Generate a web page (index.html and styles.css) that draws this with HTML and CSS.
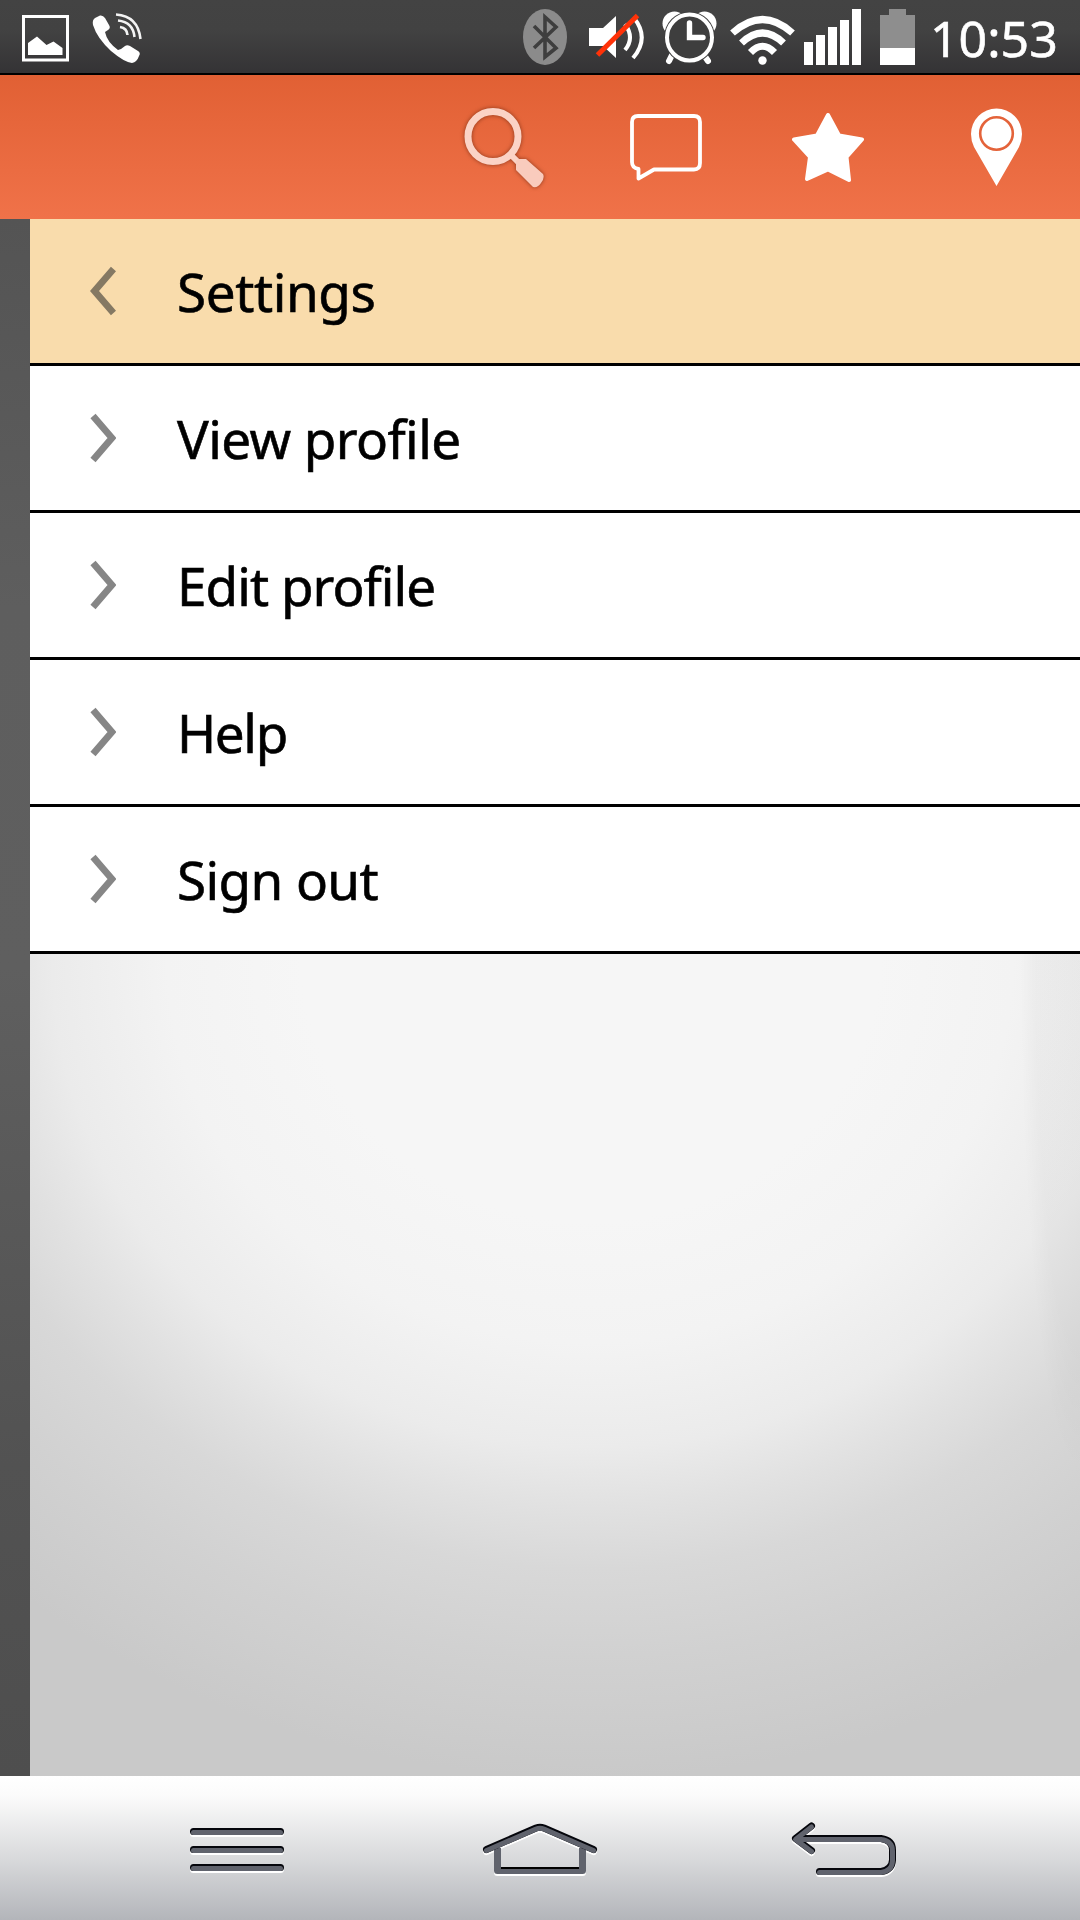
FILE: index.html
```
<!DOCTYPE html>
<html>
<head>
	<title>Settings</title>
	<meta charset="utf-8">
	<link rel="stylesheet" href="styles.css">
</head>
<body>
	<div class="statusbar">
		<svg class="s-photo" width="47" height="47" viewBox="22 15 47 47">
			<rect x="23.5" y="16.5" width="44" height="43.5" fill="none" stroke="#fff" stroke-width="3"/>
			<path d="M28 55V43L37 36.500L46.500 45L53.500 41.500L62.500 48V55Z" fill="#fff"/>
		</svg>
		<svg class="s-phone" width="52" height="52" viewBox="91 12 52 52">
			<path d="M95 18L100 15.500Q103 15 105 18L109 25Q111 28 108 30L105 32Q107 42 118 50L121 49L125 46Q127 44.500 130 46L138 51Q141 53 139 56Q137 62 132 63Q124 62 111 51Q97 38 93 25Q92 20 95 18Z" fill="#fff"/>
			<path d="M116 14.500Q138 16 140.500 39M118 20.500Q133 22 134.500 37M120 27Q127 28 127.500 35" fill="none" stroke="#f4f4f4" stroke-width="2.600"/>
		</svg>
		<div class="right">
			<svg class="s-bt" width="44" height="56" viewBox="523 9 44 56">
				<ellipse cx="545" cy="37" rx="22" ry="28" fill="#8b8b8b"/>
				<path d="M534 26L556 48L545 57V17L556 27L534 48" fill="none" stroke="#3e3e3e" stroke-width="3.600"/>
			</svg>
			<svg class="s-mute" width="58" height="48" viewBox="588 13 58 48">
				<path d="M589 28H603L616 16V58L603 46H589Z" fill="#fff"/>
				<path d="M625 24Q635 38 625 50M634 18Q650 38 633 58" fill="none" stroke="#fff" stroke-width="4"/>
				<path d="M597.500 55L637.500 15.500" stroke="#ff3208" stroke-width="5"/>
			</svg>
			<svg class="s-alarm" width="56" height="54" viewBox="661 11 56 54">
				<path d="M672 55L669 61M704 55L708 61" stroke="#fff" stroke-width="6" stroke-linecap="round"/>
				<circle cx="674.500" cy="23.500" r="12" fill="#fff"/>
				<circle cx="704.500" cy="23.500" r="12" fill="#fff"/>
				<ellipse cx="689.500" cy="37.500" rx="25.500" ry="26" fill="#3e3e3e"/>
				<ellipse cx="689.500" cy="37.500" rx="22.500" ry="23" fill="#3e3e3e" stroke="#fff" stroke-width="4"/>
				<path d="M689.500 23V37.500H703" fill="none" stroke="#fff" stroke-width="5.400" stroke-linecap="round"/>
			</svg>
			<svg class="s-wifi" width="66" height="50" viewBox="730 15 66 50">
				<path d="M732.500 33Q762.500 6 792.500 33M741.500 43Q762.500 23 783.500 43M750.500 52.500Q762.500 40 774.500 52.500" fill="none" stroke="#fff" stroke-width="7"/>
				<circle cx="762.500" cy="60.500" r="4.200" fill="#fff"/>
			</svg>
			<svg class="s-signal" width="57" height="56" viewBox="804 9 57 56">
				<path d="M804 42h9v23h-9zM816 35h9v30h-9zM828 27h9v38h-9zM840 20h9v45h-9zM852 9h9v56h-9z" fill="#fff"/>
			</svg>
			<svg class="s-battery" width="35" height="56" viewBox="880 9 35 56">
				<path d="M889 9h17v6h9v33h-35V15h9z" fill="#8e8e8e"/>
				<path d="M880 48h35v17h-35z" fill="#fff"/>
			</svg>
			<span class="time">10:53</span>
		</div>
	</div>

	<div class="appbar">
		<svg class="a-search" width="90" height="90" viewBox="460 100 90 90">
			<g stroke="#fbd3c6" fill="none">
				<circle cx="493" cy="136.500" r="25" stroke-width="7"/>
				<path d="M511 155L521 165" stroke-width="6"/>
				<path d="M516 164Q515 160 519 159H526L543 174Q545 178 541 183Q538 188 533 187L516 170Z" fill="#f9cbbd" stroke="none"/>
			</g>
		</svg>
		<svg class="a-chat" width="72" height="68" viewBox="630 114 72 68">
			<path d="M638 116H694Q700 116 700 122V163Q700 169.500 694 169.500H654L638.500 178.500V169Q632 168 632 162V122Q632 116 638 116Z" fill="none" stroke="#fff" stroke-width="3.800" stroke-linejoin="round"/>
		</svg>
		<svg class="a-star" width="72" height="70" viewBox="792 113 72 70">
			<path d="M828 115L839 135.500L862 139.500L846.500 157L849 180L828 169.500L807 179L810 157L794 139.500L817 135.500Z" fill="#fff" stroke="#fff" stroke-width="4" stroke-linejoin="round"/>
		</svg>
		<svg class="a-pin" width="52" height="78" viewBox="970 108 52 78">
			<path d="M996.500 186L974 147Q971 141 971 134A25.500 25.500 0 0 1 1022 134Q1022 141 1019 147Z" fill="#fff"/>
			<circle cx="996.500" cy="133.500" r="16.300" fill="none" stroke="#e4633a" stroke-width="2.600"/>
		</svg>
	</div>

	<div class="main">
		<div class="page-edge"></div>
		<div class="panel">
			<ul class="menu">
				<li class="current">
					<svg width="26" height="50" viewBox="0 0 26 50"><path d="M23.500 3L4.500 25L23.500 47"/></svg>
					<span class="settings">Settings</span>
				</li>
				<li>
					<svg width="26" height="50" viewBox="0 0 26 50"><path d="M3 3L22 25L3 47"/></svg>
					<span class="view">View profile</span>
				</li>
				<li>
					<svg width="26" height="50" viewBox="0 0 26 50"><path d="M3 3L22 25L3 47"/></svg>
					<span class="edit">Edit profile</span>
				</li>
				<li>
					<svg width="26" height="50" viewBox="0 0 26 50"><path d="M3 3L22 25L3 47"/></svg>
					<span class="help">Help</span>
				</li>
				<li>
					<svg width="26" height="50" viewBox="0 0 26 50"><path d="M3 3L22 25L3 47"/></svg>
					<span class="signout">Sign out</span>
				</li>
			</ul>
			<div class="empty"></div>
		</div>
	</div>

	<div class="navbar">
		<svg class="n-menu" width="96" height="50" viewBox="189 1826 96 50">
			<defs><path id="bars" d="M193.500 1831.500H280.500M193.500 1849.500H280.500M193.500 1867.500H280.500"/></defs>
			<use href="#bars" class="light" y="2"/>
			<use href="#bars" class="dark"/>
			<use href="#bars" class="fill" y="1"/>
		</svg>
		<svg class="n-home" width="116" height="56" viewBox="482 1822 116 56">
			<defs>
				<path id="walls" d="M497.500 1848V1870.500H582.500V1848"/>
				<path id="roof" d="M486.500 1849.500L536 1828Q540 1826.500 544 1828L593.500 1849.500"/>
			</defs>
			<use href="#walls" class="light" y="2"/>
			<use href="#roof" class="light" y="2"/>
			<use href="#walls" class="fill wide"/>
			<path d="M501 1868H579" stroke="#000" stroke-width="2"/>
			<use href="#roof" class="dark"/>
			<use href="#roof" class="fill" y="1"/>
		</svg>
		<svg class="n-back" width="108" height="58" viewBox="790 1820 108 58">
			<defs><path id="back" d="M811.500 1826L795.500 1838.500L811.500 1850.500M798 1838.500H881Q892.500 1840 892.500 1850V1860Q892 1870 881 1871.500H819.500"/></defs>
			<use href="#back" class="light" y="2"/>
			<use href="#back" class="dark"/>
			<use href="#back" class="fill" y="1"/>
		</svg>
	</div>
</body>
</html>
```
FILE: styles.css
```
*{
	padding: 0;
	margin: 0;
	box-sizing: border-box;
}
body{
	width: 1080px;
	height: 1920px;
	display: flex;
	flex-direction: column;
	overflow: hidden;
	font-family: "Noto Sans", "Open Sans", sans-serif;
}
svg{
	display: block;
	flex: none;
}

/* status bar */
.statusbar{
	height: 75px;
	display: flex;
	align-items: flex-start;
	padding-left: 22px;
	background: linear-gradient(#434343 0, #424242 30px, #343335 73px);
	border-bottom: 2px solid #000;
}
.s-photo{
	margin-top: 15px;
}
.s-phone{
	margin: 12px 0 0 22px;
}
.right{
	display: flex;
	align-items: flex-start;
	margin-left: 380px;
}
.s-bt, .s-signal, .s-battery{
	margin-top: 9px;
}
.s-mute{
	margin: 13px 0 0 21px;
}
.s-alarm{
	margin: 11px 0 0 15px;
}
.s-wifi{
	margin: 15px 0 0 13px;
}
.s-signal{
	margin-left: 8px;
}
.s-battery{
	margin-left: 19px;
}
.time{
	margin: 2px 0 0 15px;
	color: #fff;
	font-size: 50px;
	line-height: 72px;
	-webkit-text-stroke: 0.6px #fff;
	white-space: nowrap;
}

/* orange bar */
.appbar{
	height: 144px;
	display: flex;
	align-items: flex-start;
	padding-left: 460px;
	background: linear-gradient(#e16034, #f07249);
}
.a-search{
	margin-top: 25px;
	filter: drop-shadow(0 0 2px rgba(110, 40, 15, 0.75));
}
.a-chat{
	margin: 39px 0 0 80px;
}
.a-star{
	margin: 38px 0 0 90px;
}
.a-pin{
	margin: 33px 0 0 106px;
}

.main{
	height: 1557px;
	display: flex;
}
.page-edge{
	width: 30px;
	background: linear-gradient(#545454 0, #5e5e5e 25%, #5f5f5f 48%, #525252 80%, #4e4e4e);
}
.panel{
	flex: 1;
	display: flex;
	flex-direction: column;
}
.menu{
	list-style: none;
}
.menu li{
	height: 147px;
	display: flex;
	align-items: center;
	padding-left: 60px;
	background: #fff;
	border-bottom: 3px solid #000;
}
.menu li.current{
	background: #f9dcac;
}
.menu svg path{
	fill: none;
	stroke: #868686;
	stroke-width: 6.8;
}
.menu .current svg path{
	stroke: #857963;
}
.menu span{
	margin: 1px 0 0 61px;
	font-size: 53px;
	line-height: 72px;
	color: #000;
	-webkit-text-stroke: 0.6px #000;
	white-space: nowrap;
}
.menu .settings{
	letter-spacing: -0.4px;
}
.menu .view{
	letter-spacing: -0.6px;
}
.menu .edit{
	letter-spacing: -0.95px;
}
.menu .help{
	letter-spacing: -1.4px;
}
.menu .signout{
	letter-spacing: -0.6px;
}
.empty{
	flex: 1;
	background:
		radial-gradient(ellipse 60px 520px at 1050px 0, rgba(0, 0, 0, 0.025) 75%, transparent),
		radial-gradient(ellipse 960px 870px at 560px 6px, #f6f6f6 30%, #f3f3f3 44%, #ebebeb 56%, #e1e1e1 63%, #d8d8d8 70%, #d1d1d1 80%, #c9c9c9 94%);
}

/* system buttons */
.navbar{
	height: 144px;
	display: flex;
	align-items: flex-start;
	padding-left: 189px;
	background: linear-gradient(#fff 0, #fbfbfb 14%, #d8d9db 58%, #b3b5ba);
}
.n-menu{
	margin-top: 50px;
}
.n-home{
	margin: 46px 0 0 197px;
}
.n-back{
	margin: 44px 0 0 192px;
}
.navbar use{
	fill: none;
	stroke-width: 7;
	stroke-linecap: round;
	stroke-linejoin: round;
}
.navbar .light{
	stroke: #fff;
}
.navbar .dark{
	stroke: #05060c;
}
.navbar .fill{
	stroke: #60636d;
	stroke-width: 5;
}
.navbar .wide{
	stroke-width: 7;
	stroke-linecap: butt;
}
```
